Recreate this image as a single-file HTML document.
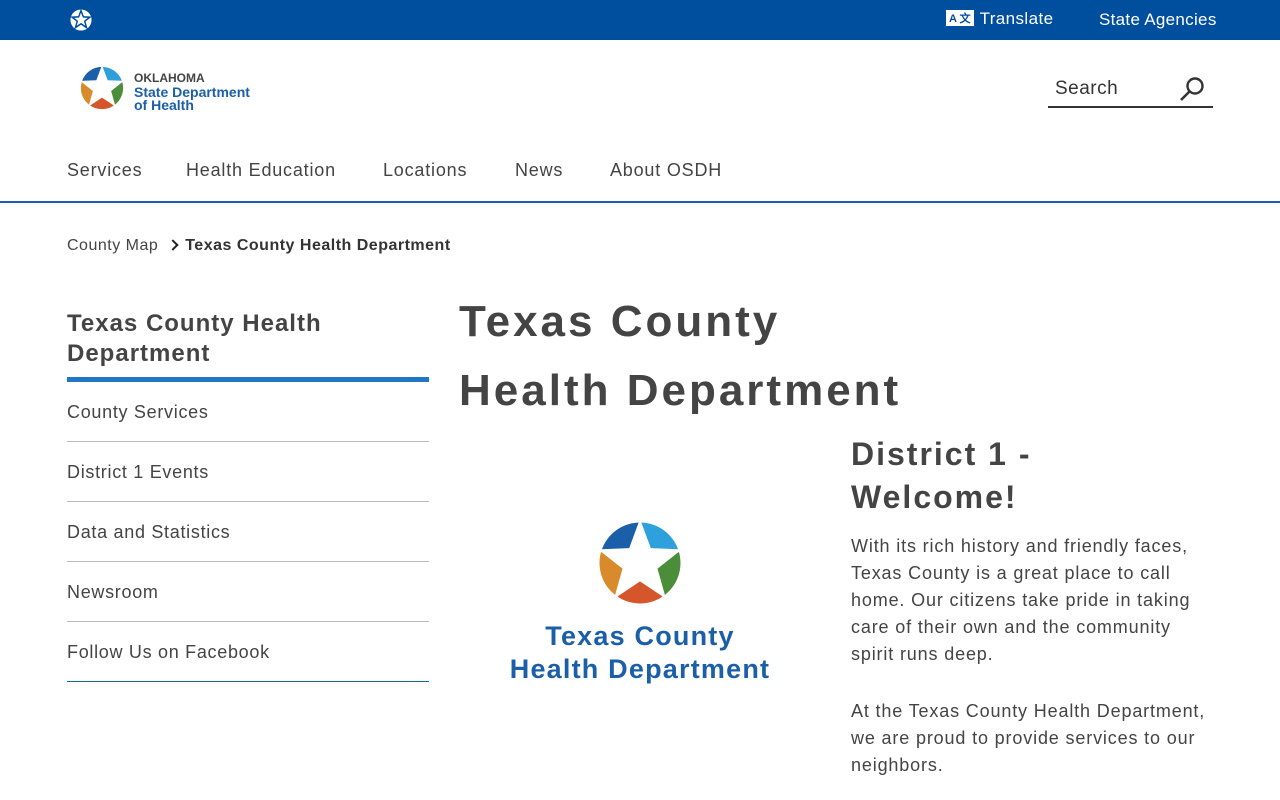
<!DOCTYPE html>
<html><head><meta charset="utf-8"><style>
*{margin:0;padding:0;box-sizing:border-box}
body{width:1280px;height:800px;overflow:hidden;background:#fff;font-family:"Liberation Sans",sans-serif;color:#444;position:relative}
.a{position:absolute;white-space:nowrap}
.top{position:absolute;left:0;top:0;width:1280px;height:40px;background:#004f9e}
.nav{font-size:18px;letter-spacing:.8px;color:#444;top:160px}
.side{left:67px;width:362px;font-size:18px;letter-spacing:.7px}
.side div{height:60px;line-height:60px;border-bottom:1px solid #bbb}
h1{font-weight:bold;font-size:44px;color:#444;letter-spacing:3px}
</style></head><body>
<svg width="0" height="0" style="position:absolute"><defs>
<g id="logo">
<path d="M0 0 L0 -44 A44 44 0 0 1 41.85 -13.6 Z" fill="#2ea0dc"/>
<path d="M0 0 L0 -44 A44 44 0 0 1 41.85 -13.6 Z" fill="#4c8d3a" transform="rotate(72)"/>
<path d="M0 0 L0 -44 A44 44 0 0 1 41.85 -13.6 Z" fill="#d4562a" transform="rotate(144)"/>
<path d="M0 0 L0 -44 A44 44 0 0 1 41.85 -13.6 Z" fill="#d98a2a" transform="rotate(216)"/>
<path d="M0 0 L0 -44 A44 44 0 0 1 41.85 -13.6 Z" fill="#1a5fa8" transform="rotate(288)"/>
<polygon points="0,-48 11.76,-16.18 45.65,-14.83 19.02,6.18 28.21,38.83 0,20 -28.21,38.83 -19.02,6.18 -45.65,-14.83 -11.76,-16.18" fill="#fff"/>
</g></defs></svg>
<div class="top"></div>
<svg class="a" style="left:69px;top:8px" width="24" height="24" viewBox="-50 -50 100 100">
<circle r="44" fill="#fff"/>
<polygon points="0,-48 11.76,-16.18 45.65,-14.83 19.02,6.18 28.21,38.83 0,20 -28.21,38.83 -19.02,6.18 -45.65,-14.83 -11.76,-16.18" fill="#004f9e"/>
<polygon points="0,-30 8,-10 28,-9 12,4 18,24 0,12 -18,24 -12,4 -28,-9 -8,-10" fill="#fff"/></svg>
<div class="a" style="left:946px;top:9px;color:#fff;font-size:17px;letter-spacing:.4px"><span style="display:inline-block;background:#fff;color:#004f9e;font-size:11px;font-weight:bold;padding:0 3px;margin-right:6px;vertical-align:2px;letter-spacing:0">A 文</span>Translate</div>
<div class="a" style="left:1099px;top:10px;color:#fff;font-size:17px;letter-spacing:.3px">State Agencies</div>

<svg class="a" style="left:78px;top:64px" width="48" height="48" viewBox="-50 -50 100 100"><use href="#logo"/></svg>
<div class="a" style="left:134px;top:72px;font-size:12px;font-weight:bold;color:#444;line-height:12px">OKLAHOMA</div>
<div class="a" style="left:134px;top:86px;font-size:14px;color:#1a5fa8;line-height:13px;font-weight:bold">State Department<br>of Health</div>

<div class="a" style="left:1055px;top:78px;font-size:19px;color:#333;letter-spacing:.5px">Search</div>
<svg class="a" style="left:1178px;top:76px" width="28" height="28" viewBox="0 0 28 28"><circle cx="17" cy="10" r="7.5" fill="none" stroke="#333" stroke-width="2.4"/><line x1="11.5" y1="15.5" x2="3" y2="24" stroke="#333" stroke-width="2.6"/></svg>
<div class="a" style="left:1048px;top:106px;width:165px;height:2px;background:#333"></div>

<div class="a nav" style="left:67px">Services</div>
<div class="a nav" style="left:186px">Health Education</div>
<div class="a nav" style="left:383px">Locations</div>
<div class="a nav" style="left:515px">News</div>
<div class="a nav" style="left:610px">About OSDH</div>
<div class="a" style="left:0;top:201px;width:1280px;height:2px;background:#1a5fa8"></div>

<div class="a" style="left:67px;top:237px;font-size:16px;letter-spacing:.5px">County Map <span style="display:inline-block;width:8px;height:8px;border-right:2px solid #222;border-top:2px solid #222;transform:rotate(45deg);margin:0 8px 1px 6px"></span><b style="color:#333">Texas County Health Department</b></div>

<div class="a" style="left:67px;top:309px;font-size:24px;font-weight:bold;line-height:30px;color:#444;letter-spacing:1px">Texas County Health<br>Department</div>
<div class="a" style="left:67px;top:377px;width:362px;height:5px;background:#1f78c1"></div>
<div class="a side" style="top:382px">
<div>County Services</div><div>District 1 Events</div><div>Data and Statistics</div><div>Newsroom</div><div style="border-color:#1a6a8a">Follow Us on Facebook</div></div>

<h1 class="a" style="left:459px;top:297px">Texas County</h1>
<h1 class="a" style="left:459px;top:366px">Health Department</h1>

<svg class="a" style="left:594px;top:517px" width="92" height="92" viewBox="-50 -50 100 100"><use href="#logo"/></svg>
<div class="a" style="left:459px;top:620px;width:362px;text-align:center;font-size:27px;font-weight:bold;color:#1a5fa8;line-height:33px;letter-spacing:1.2px">Texas County<br>Health Department</div>

<div class="a" style="left:851px;top:433px;font-size:32px;font-weight:bold;line-height:43px;color:#444;letter-spacing:2px">District 1 -<br>Welcome!</div>
<div class="a" style="left:851px;top:533px;font-size:18px;line-height:27px;letter-spacing:.85px;width:380px">With its rich history and friendly faces,<br>Texas County is a great place to call<br>home. Our citizens take pride in taking<br>care of their own and the community<br>spirit runs deep.<br><span style="display:block;height:30px"></span>At the Texas County Health Department,<br>we are proud to provide services to our<br>neighbors.</div>
</body></html>
